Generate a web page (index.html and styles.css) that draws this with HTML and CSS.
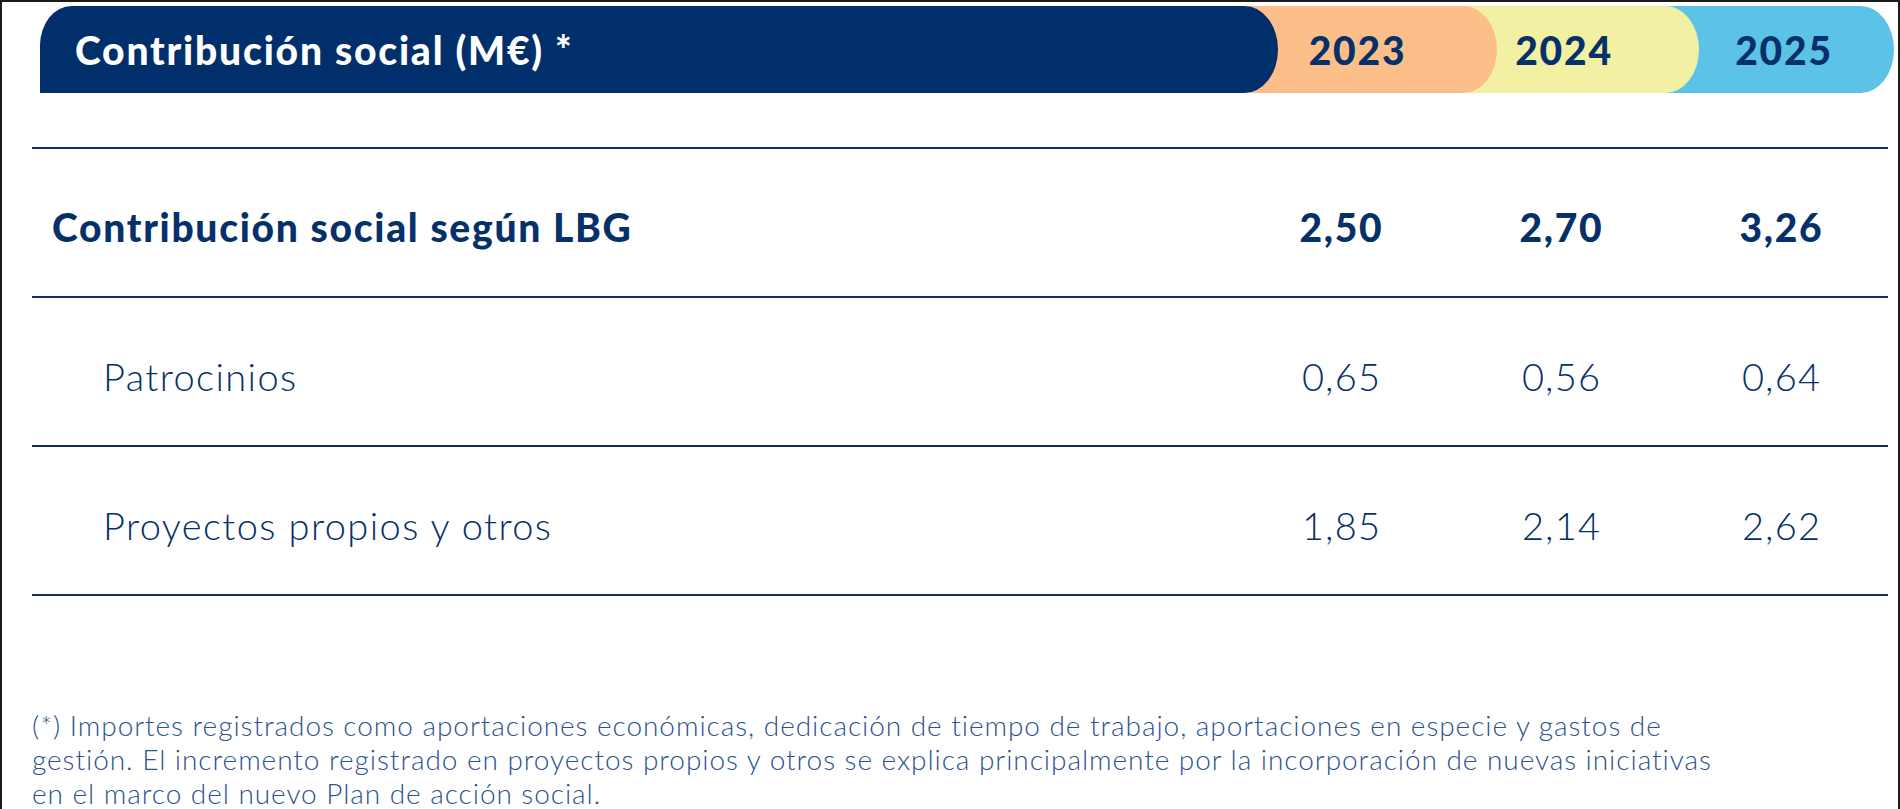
FILE: index.html
```
<!DOCTYPE html>
<html lang="es">
<head>
<meta charset="utf-8">
<title>Contribución social</title>
<link rel="stylesheet" href="styles.css">
</head>
<body>
<div class="page">
  <div class="header">
    <div class="seg seg-title">Contribución social (M€) *</div>
    <div class="seg seg-y seg-2023">2023</div>
    <div class="seg seg-y seg-2024">2024</div>
    <div class="seg seg-y seg-2025">2025</div>
  </div>
  <div class="table">
    <div class="row row-total">
      <div class="label">Contribución social según LBG</div>
      <div class="val">2,50</div>
      <div class="val">2,70</div>
      <div class="val">3,26</div>
    </div>
    <div class="row">
      <div class="label sub">Patrocinios</div>
      <div class="val">0,65</div>
      <div class="val">0,56</div>
      <div class="val">0,64</div>
    </div>
    <div class="row row-last">
      <div class="label sub">Proyectos propios y otros</div>
      <div class="val">1,85</div>
      <div class="val">2,14</div>
      <div class="val">2,62</div>
    </div>
  </div>
  <p class="note">(*) Importes registrados como aportaciones económicas, dedicación de tiempo de trabajo, aportaciones en especie y gastos de<br>gestión. El incremento registrado en proyectos propios y otros se explica principalmente por la incorporación de nuevas iniciativas<br>en el marco del nuevo Plan de acción social.</p>
</div>
</body>
</html>
```
FILE: styles.css
```
* { box-sizing: border-box; }
html, body { margin: 0; padding: 0; background: #ffffff; }
body { font-family: "Lato", "Noto Sans", sans-serif; color: #06306a; }

.page {
  width: 1900px;
  min-height: 900px;
  border: 2px solid #1b1b1b;
  border-bottom: none;
  overflow: hidden;
}

.header {
  display: flex;
  height: 87px;
  margin: 4px 4px 0 38px;
}
.seg {
  position: relative;
  display: flex;
  align-items: center;
  font-weight: 900;
  font-size: 39px;
  letter-spacing: 1.8px;
  border-radius: 0 34px 34px 0 / 0 44px 44px 0;
}
.seg-title {
  flex: 1;
  z-index: 4;
  background: #002f6c;
  color: #ffffff;
  padding-left: 35px;
  border-radius: 32px 34px 34px 0 / 40px 44px 44px 0;
}
.seg-y {
  justify-content: center;
  color: #06306a;
  margin-left: -34px;
  padding-left: 34px;
}
.seg-2023 { z-index: 3; background: #fdbf89; width: 253px; padding-right: 60px; }
.seg-2024 { z-index: 2; background: #f2f1a3; width: 236px; padding-right: 68px; }
.seg-2025 { z-index: 1; background: #5cc2e7; width: 229px; padding-right: 25px; }

.table {
  margin: 54px 10px 0 30px;
}
.row {
  display: grid;
  grid-template-columns: 1fr 220px 220px 220px;
  align-items: center;
  height: 149px;
  padding-top: 8px;
  border-top: 2px solid #0b2d62;
}
.row-last {
  height: 151px;
  border-bottom: 2px solid #0b2d62;
}
.label {
  padding-left: 20px;
  font-size: 38px;
  font-weight: 300;
  letter-spacing: 1.4px;
}
.row-total .label, .row-total .val {
  font-weight: 900;
  font-size: 39px;
  letter-spacing: 1.7px;
}
.label.sub { padding-left: 71px; }
.val {
  text-align: center;
  padding-left: 7px;
  font-size: 38px;
  font-weight: 300;
  letter-spacing: 1.2px;
}

.note {
  margin: 112px 0 0 30px;
  font-size: 28px;
  line-height: 34px;
  font-weight: 300;
  letter-spacing: 0.95px;
  color: #2c5290;
}
```
